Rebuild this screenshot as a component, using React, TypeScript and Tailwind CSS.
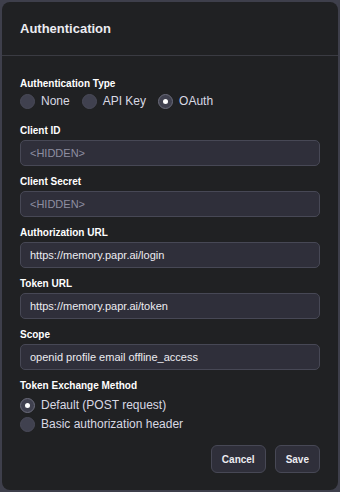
import { useState } from "react";

type Field = {
  label: string;
  value: string;
  placeholder?: string;
};

const fields: Field[] = [
  { label: "Client ID", value: "", placeholder: "<HIDDEN>" },
  { label: "Client Secret", value: "", placeholder: "<HIDDEN>" },
  { label: "Authorization URL", value: "https://memory.papr.ai/login" },
  { label: "Token URL", value: "https://memory.papr.ai/token" },
  { label: "Scope", value: "openid profile email offline_access" },
];

function Radio({ checked, label, onClick }: { checked: boolean; label: string; onClick: () => void }) {
  return (
    <button onClick={onClick} className="flex items-center gap-[6px] h-[18px] text-[12px] text-[#d9d9e3]">
      <span
        className={
          checked
            ? "w-[15px] h-[15px] rounded-full bg-[#40414f] flex items-center justify-center border border-[#6b6c7b]"
            : "w-[15px] h-[15px] rounded-full bg-[#40414f] flex items-center justify-center border border-[#4a4b59]"
        }
      >
        {checked && <span className="w-[5px] h-[5px] rounded-full bg-white" />}
      </span>
      {label}
    </button>
  );
}

export default function App() {
  const [authType, setAuthType] = useState("oauth");
  const [method, setMethod] = useState("default");

  return (
    <div
      className="w-[340px] h-[492px] bg-[#3e3f4b] p-[2px]"
      style={{ fontFamily: "'Liberation Sans', Arial, sans-serif" }}
    >
      <div className="h-full bg-[#202123] rounded-[8px] flex flex-col">
        {/* HEADER */}
        <div className="h-[54px] flex items-center px-[18px] border-b border-[#3a3b42]">
          <h1 className="text-[13px] font-bold text-[#ececf1]">Authentication</h1>
        </div>

        {/* BODY */}
        <div className="px-[18px] pt-[20px] flex flex-col">
          <div className="text-[10px] leading-[16px] font-bold text-white">Authentication Type</div>
          <div className="flex gap-[12px] h-[18px]">
            <Radio checked={authType === "none"} label="None" onClick={() => setAuthType("none")} />
            <Radio checked={authType === "api"} label="API Key" onClick={() => setAuthType("api")} />
            <Radio checked={authType === "oauth"} label="OAuth" onClick={() => setAuthType("oauth")} />
          </div>

          <div className="flex flex-col mt-[12px] gap-[7px]">
            {fields.map(f => (
              <div key={f.label} className="flex flex-col">
                <label className="text-[10px] leading-[18px] font-bold text-white">{f.label}</label>
                <input
                  defaultValue={f.value}
                  placeholder={f.placeholder}
                  className="h-[26px] w-full rounded-[5px] bg-[#2f2f3a] border border-[#474855] px-[9px] text-[11px] text-[#ececf1] placeholder:text-[#8e8ea0] outline-none"
                />
              </div>
            ))}
          </div>

          <div className="mt-[7px] text-[10px] leading-[18px] font-bold text-white">Token Exchange Method</div>
          <div className="flex flex-col gap-[1px] mt-[1px]">
            <Radio checked={method === "default"} label="Default (POST request)" onClick={() => setMethod("default")} />
            <Radio checked={method === "basic"} label="Basic authorization header" onClick={() => setMethod("basic")} />
          </div>

          {/* FOOTER */}
          <div className="flex justify-end gap-[9px] mt-[12px]">
            <button className="h-[28px] px-[10px] rounded-[6px] bg-[#2f2f3a] border border-[#474855] text-[10px] font-bold text-[#ececf1]">
              Cancel
            </button>
            <button className="h-[28px] px-[10px] rounded-[6px] bg-[#2f2f3a] border border-[#474855] text-[10px] font-bold text-[#ececf1]">
              Save
            </button>
          </div>
        </div>
      </div>
    </div>
  );
}
